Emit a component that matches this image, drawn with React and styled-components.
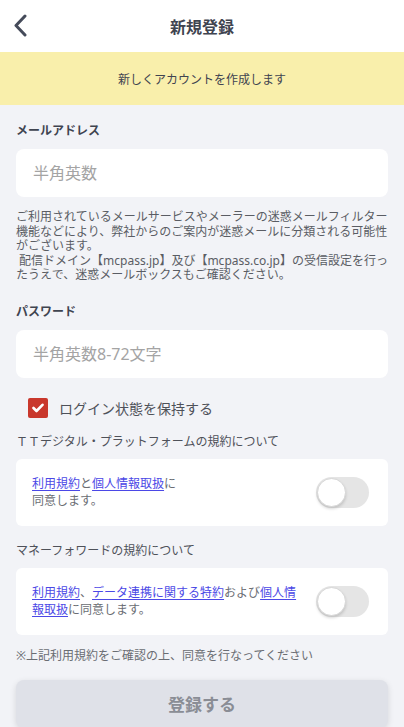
import React, {useState} from 'react';
import styled, {createGlobalStyle} from 'styled-components';

const GlobalStyle = createGlobalStyle`
  * { box-sizing: border-box; }
  body {
    margin: 0;
    background: #f2f3f7;
    font-family: "Noto Sans", "Noto Sans CJK JP", sans-serif;
    color: #4a4d55;
  }
`

const Toggle = ({on, onClick}) => (
    <ToggleTrack $on={on} onClick={onClick}>
        <ToggleKnob $on={on}/>
    </ToggleTrack>
)

const App = () => {
    const [keep, setKeep] = useState(true)
    const [tt, setTt] = useState(false)
    const [mf, setMf] = useState(false)

    return (
        <Page>
            <GlobalStyle/>
            <Header>
                <BackButton>
                    <svg width="16" height="24" viewBox="0 0 16 24" fill="none">
                        <path d="M12 2L3 11.5L12 21" stroke="#454b5a" strokeWidth="3" strokeLinecap="round" strokeLinejoin="round"/>
                    </svg>
                </BackButton>
                <Title>新規登録</Title>
            </Header>
            <Banner>新しくアカウントを作成します</Banner>
            <Form>
                <Label>メールアドレス</Label>
                <Input placeholder="半角英数"/>
                <Notice>
                    ご利用されているメールサービスやメーラーの迷惑メールフィルター機能などにより、弊社からのご案内が迷惑メールに分類される可能性がございます。<br/>
                    &nbsp;配信ドメイン【mcpass.jp】及び【mcpass.co.jp】の受信設定を行ったうえで、迷惑メールボックスもご確認ください。
                </Notice>
                <Label $top={20}>パスワード</Label>
                <Input type="password" placeholder="半角英数8-72文字"/>
                <CheckRow onClick={() => setKeep(!keep)}>
                    <CheckBox $checked={keep}>
                        {keep && (
                            <svg width="12" height="10" viewBox="0 0 12 10">
                                <path d="M1.5 5L4.5 8L10.5 1.8" stroke="#fff" strokeWidth="2.6" fill="none" strokeLinecap="round" strokeLinejoin="round"/>
                            </svg>
                        )}
                    </CheckBox>
                    <CheckText>ログイン状態を保持する</CheckText>
                </CheckRow>
                <SectionTitle>ＴＴデジタル・プラットフォームの規約について</SectionTitle>
                <Card>
                    <CardText>
                        <TermLink href="#">利用規約</TermLink>と<TermLink href="#">個人情報取扱</TermLink>に<br/>同意します。
                    </CardText>
                    <Toggle on={tt} onClick={() => setTt(!tt)}/>
                </Card>
                <SectionTitle $top={16}>マネーフォワードの規約について</SectionTitle>
                <Card>
                    <CardText>
                        <TermLink href="#">利用規約</TermLink>、<TermLink href="#">データ連携に関する特約</TermLink>および<TermLink href="#">個人情報取扱</TermLink>に同意します。
                    </CardText>
                    <Toggle on={mf} onClick={() => setMf(!mf)}/>
                </Card>
                <Note>※上記利用規約をご確認の上、同意を行なってください</Note>
                <SubmitButton disabled>登録する</SubmitButton>
            </Form>
        </Page>
    );
};

const Page = styled.div`
  width: 404px;
  min-height: 727px;
  background: #f2f3f7;
`

const Header = styled.header`
  position: relative;
  height: 52px;
  background: #fff;
  display: flex;
  align-items: center;
  justify-content: center;
`

const BackButton = styled.button`
  position: absolute;
  left: 11px;
  top: 13px;
  width: 20px;
  height: 26px;
  padding: 0;
  border: none;
  background: transparent;
  display: flex;
  align-items: center;
  justify-content: center;
`

const Title = styled.h1`
  margin: 0;
  font-size: 16px;
  font-weight: 700;
  color: #3f4450;
`

const Banner = styled.div`
  height: 53px;
  background: #f9efab;
  display: flex;
  align-items: center;
  justify-content: center;
  font-size: 12px;
  color: #3f4450;
`

const Form = styled.div`
  padding: 0 16px 0;
  display: flex;
  flex-direction: column;
`

const Label = styled.div`
  margin-top: ${({$top}) => $top || 17}px;
  font-size: 12px;
  font-weight: 700;
  line-height: 18px;
  color: #3f4450;
  margin-bottom: 9px;
`

const Input = styled.input`
  width: 100%;
  height: 48px;
  border: none;
  border-radius: 8px;
  background: #fff;
  padding: 0 17px;
  font-family: inherit;
  font-size: 16px;
  color: #333;
  outline: none;

  &::placeholder {
    color: #a4a4a4;
  }
`

const Notice = styled.p`
  margin: 13px 0 0;
  font-size: 12px;
  line-height: 14.5px;
  color: #5a5d64;
`

const CheckRow = styled.label`
  margin: 20px 0 0 12px;
  height: 20px;
  display: flex;
  align-items: center;
  gap: 11px;
  cursor: pointer;
`

const CheckBox = styled.span`
  width: 20px;
  height: 20px;
  border-radius: 2px;
  background: ${({$checked}) => ($checked ? '#c9372c' : '#fff')};
  border: ${({$checked}) => ($checked ? 'none' : '1px solid #999')};
  display: flex;
  align-items: center;
  justify-content: center;
`

const CheckText = styled.span`
  font-size: 14px;
  color: #4e5159;
`

const SectionTitle = styled.div`
  margin-top: ${({$top}) => $top || 15}px;
  margin-bottom: 8px;
  font-size: 12px;
  line-height: 18px;
  color: #4e5159;
`

const Card = styled.div`
  height: 67px;
  background: #fff;
  border-radius: 6px;
  padding: 0 19px 0 16px;
  display: flex;
  align-items: center;
  justify-content: space-between;
  gap: 16px;
`

const CardText = styled.div`
  font-size: 12px;
  line-height: 17.5px;
  color: #6a6d73;
  max-width: 268px;
`

const TermLink = styled.a`
  color: #4b48e6;
  text-decoration: underline;
  text-underline-offset: 2px;
`

const ToggleTrack = styled.button`
  position: relative;
  flex-shrink: 0;
  width: 53px;
  height: 31px;
  border: none;
  padding: 0;
  border-radius: 16px;
  background: ${({$on}) => ($on ? '#4cd964' : '#e5e5e5')};
  cursor: pointer;
`

const ToggleKnob = styled.span`
  position: absolute;
  top: 1px;
  left: ${({$on}) => ($on ? '23px' : '1px')};
  width: 29px;
  height: 29px;
  border-radius: 50%;
  background: #fff;
  border: 1px solid #d6d6d6;
  box-shadow: 0 2px 3px rgba(0, 0, 0, 0.15);
  transition: left 0.2s;
`

const Note = styled.div`
  margin-top: 13px;
  font-size: 12px;
  line-height: 16px;
  color: #6a6d73;
`

const SubmitButton = styled.button`
  margin-top: 16px;
  height: 48px;
  width: 100%;
  border: none;
  border-radius: 8px;
  background: #dfe1e8;
  box-shadow: 0 2px 6px rgba(0, 0, 0, 0.12);
  font-family: inherit;
  font-size: 17px;
  font-weight: 700;
  color: #8a8d95;
`

export default App;
